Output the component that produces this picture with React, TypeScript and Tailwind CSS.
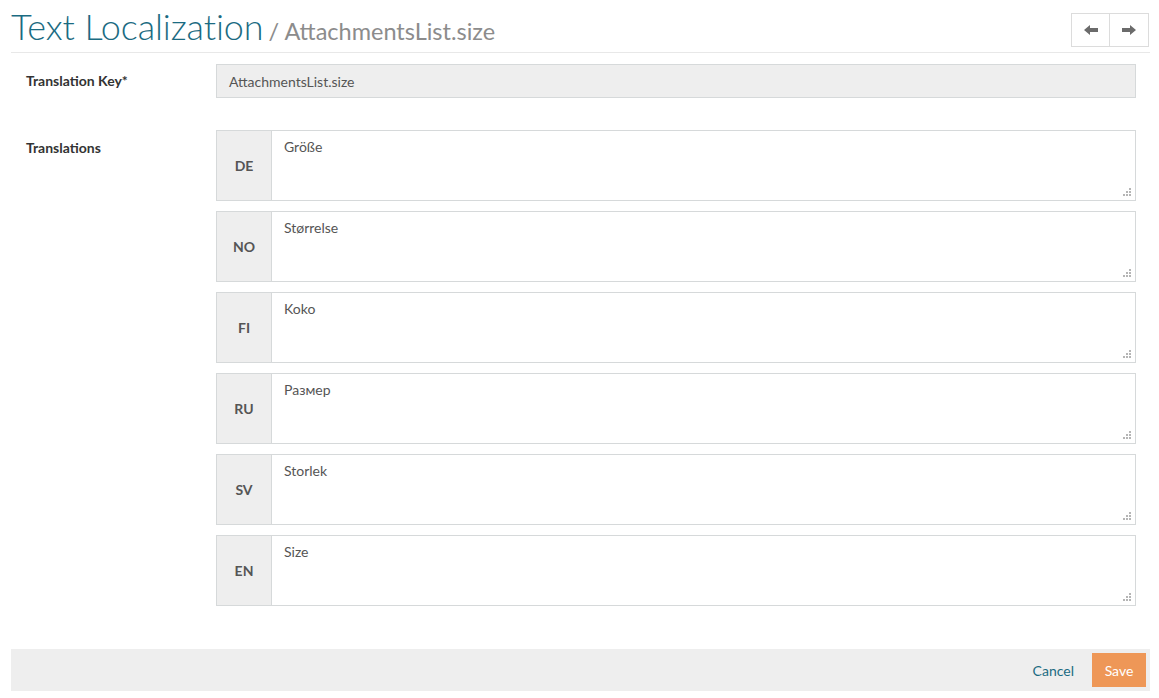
import * as React from "react"

const TRANSLATIONS = [
  { lang: "DE", value: "Größe" },
  { lang: "NO", value: "Størrelse" },
  { lang: "FI", value: "Koko" },
  { lang: "RU", value: "Размер" },
  { lang: "SV", value: "Storlek" },
  { lang: "EN", value: "Size" },
]

function Grip() {
  return (
    <svg width="9" height="9" viewBox="0 0 9 9" className="absolute right-[3px] bottom-[3px]">
      <rect x="6" y="0" width="2" height="2" fill="#b5b5b5" />
      <rect x="3" y="3" width="2" height="2" fill="#b5b5b5" />
      <rect x="6" y="3" width="2" height="2" fill="#b5b5b5" />
      <rect x="0" y="6" width="2" height="2" fill="#b5b5b5" />
      <rect x="3" y="6" width="2" height="2" fill="#b5b5b5" />
      <rect x="6" y="6" width="2" height="2" fill="#b5b5b5" />
    </svg>
  )
}

function Arrow({ dir }: { dir: "left" | "right" }) {
  return (
    <svg width="14" height="10" viewBox="0 0 14 10" className={dir === "right" ? "rotate-180" : ""}>
      <path d="M0 5 L6 0 L6 3 L14 3 L14 7 L6 7 L6 10 Z" fill="#6b6b6b" />
    </svg>
  )
}

export default function App() {
  return (
    <div className="min-h-screen bg-white pl-[11px] pr-[9px] text-[14px] text-[#333]" style={{ fontFamily: "Lato, 'Open Sans', sans-serif" }}>
      {/* Header */}
      <div className="flex items-end justify-between h-[53px] border-b border-[#e8e8e8]">
        <h1 className="flex items-baseline pb-[8px] leading-none">
          <span className="text-[36px] font-light text-[#1b6b82] tracking-[-0.1px]">Text Localization</span>
          <span className="ml-[5px] text-[23.5px] text-[#8c8c8c]">/ AttachmentsList.size</span>
        </h1>
        <div className="flex mb-[5px] mr-[1px] border border-[#dcdcdc]">
          <button className="w-[38px] h-[32px] flex items-center justify-center border-r border-[#dcdcdc]">
            <Arrow dir="left" />
          </button>
          <button className="w-[38px] h-[32px] flex items-center justify-center">
            <Arrow dir="right" />
          </button>
        </div>
      </div>

      {/* Form */}
      <div className="pt-[11px] pr-[14px]">
        <div className="flex items-center">
          <label className="w-[205px] pl-[15px] pb-[2px] font-bold text-[#333]">Translation Key*</label>
          <div className="flex-1 h-[34px] flex items-center px-[12px] bg-[#eeeeee] border border-[#d6d9da] text-[#555]">
            AttachmentsList.size
          </div>
        </div>

        <div className="flex mt-[32px]">
          <label className="w-[205px] pl-[15px] pt-[7px] font-bold text-[#333]">Translations</label>
          <div className="flex-1 flex flex-col gap-[10px]">
            {TRANSLATIONS.map((t) => (
              <div key={t.lang} className="flex h-[71px] border border-[#d6d9da]">
                <div className="w-[55px] flex items-center justify-center bg-[#eeeeee] border-r border-[#d6d9da] font-bold text-[#555]">
                  {t.lang}
                </div>
                <div className="relative flex-1 bg-white px-[12px] pt-[5px] text-[#555]">
                  {t.value}
                  <Grip />
                </div>
              </div>
            ))}
          </div>
        </div>
      </div>

      {/* Footer */}
      <div className="mt-[43px] h-[42px] bg-[#eeeeee] flex items-center justify-end gap-[18px] pr-[4px]">
        <a className="text-[#1b6b82]">Cancel</a>
        <button className="h-[34px] w-[54px] bg-[#ee9757] text-white">Save</button>
      </div>
    </div>
  )
}
